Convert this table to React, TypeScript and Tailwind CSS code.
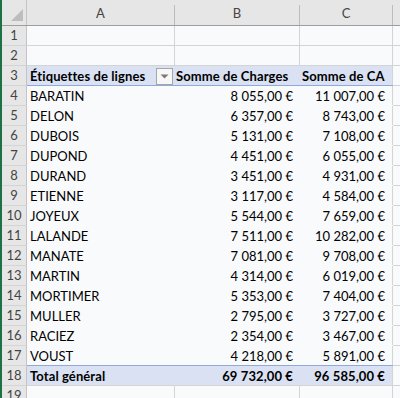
import { ReactNode } from "react"

type Line = {
  name: string
  charges: string
  ca: string
}

const lines: Line[] = [
  { name: "BARATIN", charges: "8 055,00 €", ca: "11 007,00 €" },
  { name: "DELON", charges: "6 357,00 €", ca: "8 743,00 €" },
  { name: "DUBOIS", charges: "5 131,00 €", ca: "7 108,00 €" },
  { name: "DUPOND", charges: "4 451,00 €", ca: "6 055,00 €" },
  { name: "DURAND", charges: "3 451,00 €", ca: "4 931,00 €" },
  { name: "ETIENNE", charges: "3 117,00 €", ca: "4 584,00 €" },
  { name: "JOYEUX", charges: "5 544,00 €", ca: "7 659,00 €" },
  { name: "LALANDE", charges: "7 511,00 €", ca: "10 282,00 €" },
  { name: "MANATE", charges: "7 081,00 €", ca: "9 708,00 €" },
  { name: "MARTIN", charges: "4 314,00 €", ca: "6 019,00 €" },
  { name: "MORTIMER", charges: "5 353,00 €", ca: "7 404,00 €" },
  { name: "MULLER", charges: "2 795,00 €", ca: "3 727,00 €" },
  { name: "RACIEZ", charges: "2 354,00 €", ca: "3 467,00 €" },
  { name: "VOUST", charges: "4 218,00 €", ca: "5 891,00 €" },
]

const RowHead = ({ n }: { n: number }) => (
  <div className="w-[25px] shrink-0 flex items-center justify-center pt-[1px] border-r border-b border-r-[#c4c4c4] border-b-[#d4d4d4] bg-[#e6e6e6] text-[#444]">
    {n}
  </div>
)

const ColHead = ({ label, w }: { label: string; w: string }) => (
  <div className={`${w} shrink-0 flex items-end`}>
    <div className="flex-1 h-full flex items-center justify-center pt-[2px]">{label}</div>
    <div className="w-px h-[20px] bg-[#bcbcbc]" />
  </div>
)

// plain worksheet row with the usual gridlines
const EmptyRow = ({ n }: { n: number }) => (
  <div className="flex h-[20px]">
    <RowHead n={n} />
    <div className="w-[148px] shrink-0 border-r border-b border-[#d4d4d4]" />
    <div className="w-[125px] shrink-0 border-r border-b border-[#d4d4d4]" />
    <div className="w-[93px] shrink-0 border-r border-b border-[#d4d4d4]" />
    <div className="flex-1 border-b border-[#d4d4d4]" />
  </div>
)

type PivotRowProps = {
  n: number
  a: ReactNode
  b?: ReactNode
  c?: ReactNode
  band?: boolean
  bottom: string
  bold?: boolean
}

const PivotRow = ({ n, a, b, c, band, bottom, bold }: PivotRowProps) => (
  <div className="flex h-[20px]">
    <RowHead n={n} />
    <div className={`flex w-[366px] shrink-0 border-b ${bottom} ${band ? "bg-[#d9e1f2]" : ""} ${bold ? "font-bold tracking-[0.1px]" : ""}`}>
      <div className="w-[148px] shrink-0 flex items-center pl-[3px] pt-[2px]">{a}</div>
      <div className="w-[125px] shrink-0 flex items-center justify-end pr-[7px] pt-[2px]">{b}</div>
      <div className="w-[93px] shrink-0 flex items-center justify-end pr-[7px] pt-[2px] border-r border-r-[#d4d4d4]">{c}</div>
    </div>
    <div className="flex-1 border-b border-[#d4d4d4]" />
  </div>
)

const FilterButton = () => (
  <div className="ml-auto mr-[2px] mt-[-1px] w-[17px] h-[17px] flex items-center justify-center border border-[#a6a6a6] bg-[#f7f7f7]">
    <svg width="9" height="5" viewBox="0 0 9 5">
      <path d="M0.5 0.5 L8.5 0.5 L4.5 4.5 Z" fill="#7a7a7a" />
    </svg>
  </div>
)

export default function App() {
  return (
    <div className="flex w-[400px] h-[398px] overflow-hidden bg-[#f9fafc] text-[13px] text-black font-['Lato',sans-serif]">
      <div className="w-[2px] shrink-0 bg-[#1e7145]" />
      <div className="flex-1 flex flex-col">
        {/* column letters */}
        <div className="flex h-[26px] shrink-0 bg-[#e6e6e6] border-b border-[#9e9e9e] text-[#444]">
          <div className="w-[25px] shrink-0 flex items-end border-r border-[#c4c4c4]">
            <svg width="24" height="25" viewBox="0 0 24 25">
              <path d="M21 9 L21 21 L9 21 Z" fill="#bdbdbd" />
            </svg>
          </div>
          <ColHead label="A" w="w-[148px]" />
          <ColHead label="B" w="w-[125px]" />
          <ColHead label="C" w="w-[93px]" />
          <div className="flex-1" />
        </div>

        <EmptyRow n={1} />
        <EmptyRow n={2} />

        <PivotRow
          n={3}
          band
          bold
          bottom="border-b-[#8ea9db]"
          a={
            <>
              <span>Étiquettes de lignes</span>
              <FilterButton />
            </>
          }
          b={<span className="mr-auto ml-[1px] whitespace-nowrap">Somme de Charges</span>}
          c={<span className="mr-auto ml-[2px] whitespace-nowrap">Somme de CA</span>}
        />

        {lines.map((l, i) => (
          <PivotRow
            key={l.name}
            n={i + 4}
            a={l.name}
            b={l.charges}
            c={l.ca}
            bottom={i === lines.length - 1 ? "border-b-[#8ea9db]" : "border-b-transparent"}
          />
        ))}

        <PivotRow
          n={18}
          band
          bold
          bottom="border-b-[#d4d4d4]"
          a="Total général"
          b="69 732,00 €"
          c="96 585,00 €"
        />

        <EmptyRow n={19} />
      </div>
    </div>
  )
}
